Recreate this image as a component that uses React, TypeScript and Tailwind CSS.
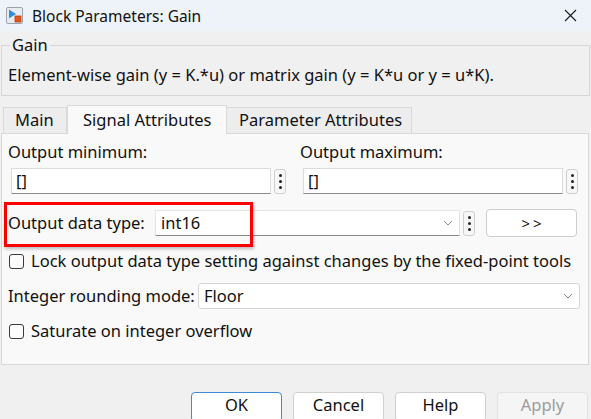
import React from "react";

const FONT = { fontFamily: '"Noto Sans", "Open Sans", sans-serif' };

function AppIcon() {
  return (
    <svg width="17" height="17" viewBox="0 0 17 17">
      <rect x="0.5" y="0.5" width="16" height="16" rx="1.5" fill="#e9edf2" stroke="#9aa3ad" />
      <polygon points="3,2.5 10,7 3,11.5" fill="#2f8fd6" />
      <rect x="9" y="9" width="6" height="6" fill="#e2571e" stroke="#b73d10" strokeWidth="0.8" />
    </svg>
  );
}

function CloseIcon() {
  return (
    <svg width="13" height="13" viewBox="0 0 13 13">
      <path d="M1 1 L12 12 M12 1 L1 12" stroke="#1a1a1a" strokeWidth="1.1" fill="none" />
    </svg>
  );
}

function Kebab() {
  return (
    <div className="w-[12px] h-[25px] shrink-0 rounded-[3px] border border-[#cfcfcf] bg-[#f7f7f7] flex flex-col items-center justify-center gap-[3px]">
      <span className="w-[3px] h-[3px] rounded-full bg-[#222]" />
      <span className="w-[3px] h-[3px] rounded-full bg-[#222]" />
      <span className="w-[3px] h-[3px] rounded-full bg-[#222]" />
    </div>
  );
}

function Chevron() {
  return (
    <svg width="10" height="6" viewBox="0 0 10 6">
      <path d="M1 1 L5 5 L9 1" stroke="#8a8a8a" strokeWidth="1" fill="none" />
    </svg>
  );
}

function TextField({ value, width }: { value: string; width: string }) {
  return (
    <div
      className={`${width} h-[26px] bg-white border border-[#dcdcdc] border-b-[#8a8a8a] flex items-center pl-[4px] text-[16.5px] text-[#111]`}
    >
      {value}
    </div>
  );
}

function Check({ label }: { label: string }) {
  return (
    <div className="flex items-center h-[20px] pl-[4px]">
      <span className="w-[15px] h-[15px] rounded-[3px] border border-[#3a3a3a] bg-[#fbfbfb] shrink-0" />
      <span className="ml-[7px] text-[16.5px] text-[#111] leading-[20px]">{label}</span>
    </div>
  );
}

function Btn({ label, kind }: { label: string; kind?: "default" | "disabled" }) {
  const cls =
    kind === "default"
      ? "border-[#3d8ad6] bg-white text-[#111]"
      : kind === "disabled"
      ? "border-[#e2e2e2] bg-[#f5f5f5] text-[#9c9c9c]"
      : "border-[#d0d0d0] bg-white text-[#111]";
  return (
    <div className={`w-[91px] h-[30px] rounded-[4px] border ${cls} flex items-center justify-center text-[16.5px] pb-[3px]`}>
      {label}
    </div>
  );
}

export default function App() {
  return (
    <div className="w-[591px] h-[419px] overflow-hidden bg-[#f0f0f0] text-[#111]" style={FONT}>
      {/* title bar */}
      <div className="h-[31px] bg-[#eef3f9] flex items-center pl-[6px] pr-[14px]">
        <AppIcon />
        <span className="ml-[9px] text-[15.5px] leading-[20px] text-[#111]">Block Parameters: Gain</span>
        <div className="ml-auto">
          <CloseIcon />
        </div>
      </div>

      {/* description group */}
      <fieldset className="mx-[1px] mt-[4px] border border-[#d6d6d6] pl-[8px] pr-[8px] pb-[10px]">
        <legend className="px-[2px] text-[16.5px] leading-[20px]">Gain</legend>
        <div className="-ml-[2px] mt-[10px] text-[16.5px] leading-[20px]">
          Element-wise gain (y = K.*u) or matrix gain (y = K*u or y = u*K).
        </div>
      </fieldset>

      {/* tabs */}
      <div className="mt-[9px] flex items-end pl-[3px] h-[28px] relative z-10">
        <div className="w-[64px] h-[26px] border border-b-0 border-[#d9d9d9] bg-[#ededed] flex items-center pl-[11px] text-[16.5px]">
          Main
        </div>
        <div className="w-[160px] h-[29px] -mb-px border border-b-0 border-[#d9d9d9] bg-[#f9f9f9] flex items-center pl-[15px] text-[16.5px]">
          Signal Attributes
        </div>
        <div className="w-[185px] h-[26px] border border-l-0 border-b-0 border-[#d9d9d9] bg-[#ededed] flex items-center pl-[12px] text-[16.5px]">
          Parameter Attributes
        </div>
      </div>

      {/* tab panel */}
      <div className="relative ml-[1px] w-[588px] h-[232px] border border-[#d9d9d9] bg-[#f9f9f9] pt-[8px] pl-[6px]">
        <div className="flex">
          <div className="w-[292px]">
            <div className="text-[16.5px] leading-[20px]">Output minimum:</div>
            <div className="mt-[6px] ml-[3px] flex items-center gap-[3px]">
              <TextField value="[]" width="w-[260px]" />
              <Kebab />
            </div>
          </div>
          <div>
            <div className="text-[16.5px] leading-[20px]">Output maximum:</div>
            <div className="mt-[6px] ml-[3px] flex items-center gap-[3px]">
              <TextField value="[]" width="w-[260px]" />
              <Kebab />
            </div>
          </div>
        </div>

        <div className="mt-[15px] flex items-center h-[28px]">
          <span className="w-[147px] text-[16.5px] leading-[20px]">Output data type:</span>
          <div className="w-[305px] h-[26px] bg-white border border-[#e4e4e4] border-b-[#8a8a8a] flex items-center pl-[5px] pr-[6px] text-[16.5px]">
            <span>int16</span>
            <span className="ml-auto">
              <Chevron />
            </span>
          </div>
          <div className="ml-[3px]">
            <Kebab />
          </div>
          <div className="ml-[11px] w-[91px] h-[28px] rounded-[4px] border border-[#cdcdcd] bg-white flex items-center justify-center text-[15px] tracking-[3px] pl-[3px]">
            &gt;&gt;
          </div>
        </div>

        <div className="mt-[14px] -ml-[3px]">
          <Check label="Lock output data type setting against changes by the fixed-point tools" />
        </div>

        <div className="mt-[12px] flex items-center h-[26px]">
          <span className="w-[190px] text-[16.5px] leading-[20px]">Integer rounding mode:</span>
          <div className="w-[382px] h-[26px] bg-white border border-[#d6d6d6] rounded-[3px] flex items-center pl-[5px] pr-[6px] text-[16.5px]">
            <span>Floor</span>
            <span className="ml-auto">
              <Chevron />
            </span>
          </div>
        </div>

        <div className="mt-[12px] -ml-[3px]">
          <Check label="Saturate on integer overflow" />
        </div>

        {/* highlight around the data type field */}
        <div className="absolute left-[2px] top-[68px] w-[249px] h-[45px] border-[3px] border-[#ff0000] shadow-[1px_2px_3px_rgba(0,0,0,0.25)] pointer-events-none" />
      </div>

      {/* dialog buttons */}
      <div className="mt-[27px] flex justify-end gap-[11px] pr-[3px]">
        <Btn label="OK" kind="default" />
        <Btn label="Cancel" />
        <Btn label="Help" />
        <Btn label="Apply" kind="disabled" />
      </div>
    </div>
  );
}
